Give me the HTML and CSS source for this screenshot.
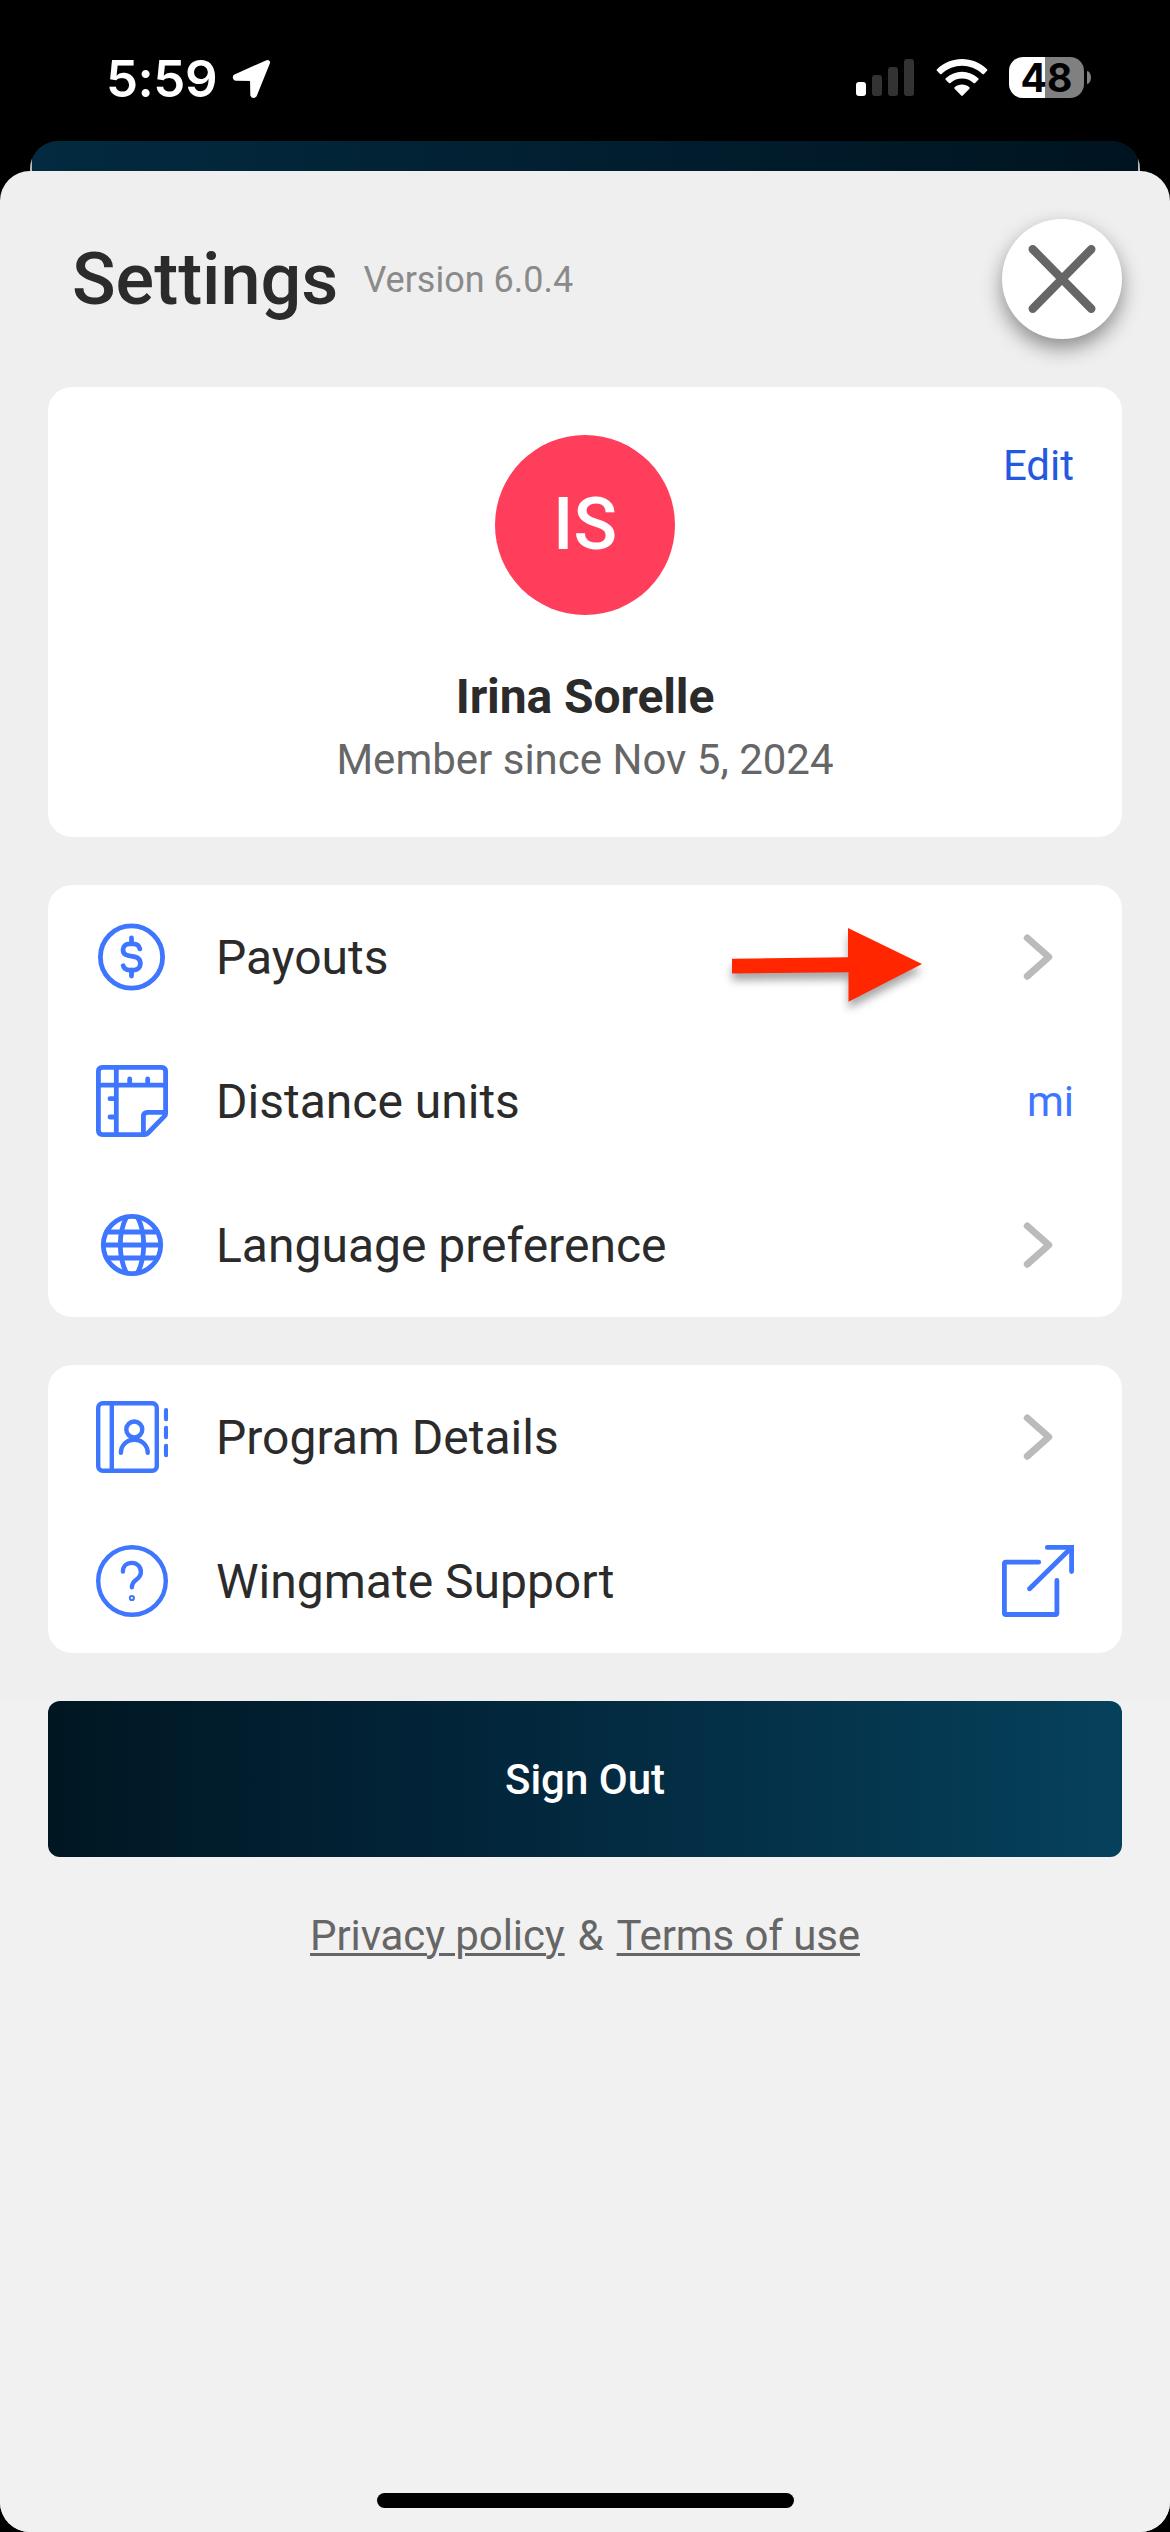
FILE: index.html
```html
<!DOCTYPE html>
<html lang="en">
<head>
<meta charset="utf-8">
<title>Settings</title>
<link rel="stylesheet" href="styles.css">
</head>
<body>
<div class="phone">
  <header class="status">
    <div class="status-left">
      <span class="time">5:59</span>
      <svg class="location" viewBox="0 0 40 40"><path d="M35.5 3.5 L3.5 17.7 Q3 19 4 19.2 L20.5 19.4 L20.8 36 Q21.3 37 22.4 36 Z" fill="#fff" stroke="#fff" stroke-width="5" stroke-linejoin="round"/></svg>
    </div>
    <div class="status-right">
      <svg class="signal" viewBox="0 0 58 38"><rect y="23" width="10" height="14" rx="3" fill="#fff"/><rect x="16" y="16" width="10" height="21" rx="3" fill="#333"/><rect x="32" y="8" width="10" height="29" rx="3" fill="#333"/><rect x="48" y="0" width="10" height="37" rx="3" fill="#333"/></svg>
      <svg class="wifi" viewBox="0 0 52 38"><g fill="#fff"><path d="M1 10.2 C15-3.4 37-3.4 51 10.2 q.8 .8 0 1.6 l-3 3.1 q-.8 .8-1.6 0 C34.5 4 17.500 4 5.600 14.900 q-.8 .8-1.6 0 l-3-3.100 q-.8-.8 0-1.600 Z"/><path d="M9.700 19.200 C19 10.500 33 10.500 42.300 19.200 q.8 .8 0 1.600 l-3.200 3.100 q-.8 .8-1.600 0 C31 18.100 21 18.100 14.500 23.900 q-.8 .8-1.600 0 l-3.200-3.100 q-.8-.8 0-1.600 Z"/><path d="M18.600 28.200 C22.800 24.600 29.200 24.600 33.400 28.200 q.8 .8 0 1.600 L26.800 36.500 q-.8 .8-1.600 0 L18.600 29.800 q-.8-.8 0-1.600 Z"/></g></svg>
      <div class="battery"><span class="level">48</span><i class="nub"></i></div>
    </div>
  </header>
  <div class="back-sheet"></div>
  <main class="sheet">
    <section class="top">
      <h1>Settings</h1>
      <span class="version">Version 6.0.4</span>
      <button class="close" aria-label="Close"><svg viewBox="0 0 120 120"><path d="M30.700 30.200 L89.300 89.800 M89.300 30.200 L30.700 89.800"/></svg></button>
    </section>

    <section class="card profile">
      <div class="avatar">IS</div>
      <div class="name">Irina Sorelle</div>
      <div class="since">Member since Nov 5, 2024</div>
      <a class="edit">Edit</a>
    </section>

    <section class="card">
      <div class="row">
        <svg class="icon" viewBox="0 0 72 72"><circle cx="35.500" cy="36" r="31.100"/><path d="M43.800 27.800 C43 24.500 40.500 22.900 37.500 22.900 H33.500 C29.800 22.900 27 25.300 27 28.800 C27 32 29 33.900 32 34.500 L39 35.900 C42.300 36.700 44.400 39 44.400 42.600 C44.400 46.500 41.500 49.100 38 49.100 H33.500 C30.300 49.100 28 47.500 27.200 44.700 M35.500 17 V22.900 M35.500 49 V55"/></svg>
        <span class="label">Payouts</span>
        <svg class="chevron" viewBox="0 0 72 72"><path d="M25.300 17 L46.800 36 L25.300 55.200"/></svg>
        <svg class="pointer" viewBox="0 0 200 84"><path d="M2 32.700 L118 31.300 V2 L192 38 L118.500 75.700 V46.200 L2 47.500 Z"/></svg>
      </div>
      <div class="row">
        <svg class="icon" viewBox="0 0 72 72"><path d="M6.500 2.400 H65.500 Q69.600 2.400 69.600 6.500 V48.500 Q69.600 50 68.500 51.100 L52 68 Q50.500 69.600 48.500 69.600 H6.500 Q2.400 69.600 2.400 65.500 V6.500 Q2.400 2.400 6.500 2.400 Z M20.300 2.400 V69.600 M2.400 20.200 H69.600 M33.700 14 V20 M51.700 14 V20 M14 33.700 H20 M14 52 H20 M69 47.400 H51.500 Q47.400 47.400 47.400 51.500 V69"/></svg>
        <span class="label">Distance units</span>
        <span class="value">mi</span>
      </div>
      <div class="row">
        <svg class="icon" viewBox="0 0 72 72"><circle cx="36" cy="36" r="28.700"/><path d="M10.500 23 H61.500 M7.400 36 H64.600 M10.500 49 H61.500 M30.300 8.500 C22.300 24 22.300 48 30.300 63.500 M41.700 8.500 C49.700 24 49.700 48 41.700 63.500"/></svg>
        <span class="label">Language preference</span>
        <svg class="chevron" viewBox="0 0 72 72"><path d="M25.300 17 L46.800 36 L25.300 55.200"/></svg>
      </div>
    </section>

    <section class="card">
      <div class="row">
        <svg class="icon thin" viewBox="0 0 72 72"><rect x="2.200" y="2.200" width="58.600" height="67.600" rx="4.500"/><path d="M15.800 2.200 V69.800 M70.100 9.300 V18 M70.100 27 V36 M70.100 45 V54 M24.900 51.700 C24.900 44.500 30.500 38.700 38.300 38.700 S51.700 44.500 51.700 51.700"/><circle cx="38.300" cy="28.500" r="8"/></svg>
        <span class="label">Program Details</span>
        <svg class="chevron" viewBox="0 0 72 72"><path d="M25.300 17 L46.800 36 L25.300 55.200"/></svg>
      </div>
      <div class="row">
        <svg class="icon thin" viewBox="0 0 72 72"><circle cx="36" cy="36" r="33.800"/><path d="M26.900 26.500 C26.900 21.500 30.500 17.900 35.900 17.900 S44.900 22 44.900 27 C44.900 35.500 35.900 33.500 35.900 42.300"/><circle class="dot" cx="35.900" cy="53" r="2.100"/></svg>
        <span class="label">Wingmate Support</span>
        <svg class="icon" viewBox="0 0 72 72"><path d="M36.700 17.200 H4 Q2.400 17.200 2.400 18.800 V68 Q2.400 69.500 4 69.500 H53.400 Q54.900 69.500 54.900 68 V35.500 M27.600 43.700 L68 4"/><path d="M45.300 2.400 H69.600 V26.500"/></svg>
      </div>
    </section>

    <footer class="bottom">
      <button class="signout">Sign Out</button>
      <p class="links"><a>Privacy policy</a><span>&amp;</span><a>Terms of use</a></p>
      <div class="home"></div>
    </footer>
  </main>
</div>
</body>
</html>
```
FILE: styles.css
```css
* { box-sizing: border-box; margin: 0; padding: 0; }
body { background: #000; font-family: Roboto, "Liberation Sans", sans-serif; color: #2b2b2b; }
svg { display: block; flex: none; }
button { border: 0; font-family: inherit; }

.phone { width: 1170px; height: 2532px; display: flex; flex-direction: column; overflow: hidden; }

.status { height: 141px; display: flex; justify-content: space-between; padding: 57px 79px 0 106px; font-family: Inter, "Liberation Sans", sans-serif; }
.status-left, .status-right { display: flex; align-items: flex-start; }
.time { font-size: 51px; font-weight: 600; line-height: 43px; letter-spacing: -0.5px; color: #fff; }
.location { width: 40px; height: 40px; margin: 2px 0 0 15px; }
.signal { width: 58px; height: 38px; margin: 2px 22px 0 0; }
.wifi { width: 52px; height: 38px; margin: 2px 21px 0 0; }
.battery { display: flex; align-items: center; gap: 3px; }
.level { width: 75px; height: 41px; border-radius: 14px; background: linear-gradient(90deg, #fff 36px, #808080 36px); color: #000; font-size: 39px; font-weight: 700; line-height: 42px; text-align: center; }
.nub { width: 4px; height: 13px; border-radius: 0 4px 4px 0 / 0 6.5px 6.5px 0; background: #808080; }

.back-sheet { height: 30px; margin: 0 30px; border-radius: 28px 28px 0 0; background: linear-gradient(#bbb, #bbb) left bottom / 2px 12px no-repeat, linear-gradient(#bbb, #bbb) right bottom / 2px 12px no-repeat, linear-gradient(90deg, #032a40, #001420); flex: none; }

.sheet { flex: 1; display: flex; flex-direction: column; gap: 48px; background: #efefef; border-radius: 30px; overflow: hidden; padding-top: 48px; }
.top { height: 120px; display: flex; align-items: center; padding: 0 48px 0 72px; }
h1 { font-size: 72px; font-weight: 500; line-height: 84px; padding-top: 2px; }
.version { font-size: 36px; color: #8a8a8a; margin-left: 25px; padding-top: 2px; }
.close { width: 120px; height: 120px; margin-left: auto; border-radius: 50%; background: #fff; box-shadow: 0 9px 20px rgba(0,0,0,.42); }
.close svg { width: 120px; height: 120px; fill: none; stroke: #666; stroke-width: 8.400px; stroke-linecap: round; }

.card { margin: 0 48px; background: #fff; border-radius: 24px; }
.profile { height: 450px; padding-top: 48px; display: flex; flex-direction: column; align-items: center; position: relative; }
.avatar { width: 180px; height: 180px; border-radius: 50%; background: #ff3e5b; color: #fff; font-size: 72px; font-weight: 500; line-height: 180px; text-align: center; }
.name { margin-top: 52px; font-size: 48px; font-weight: 700; line-height: 60px; letter-spacing: -0.1px; }
.since { margin-top: 6px; font-size: 42px; line-height: 54px; color: #666; }
.edit { position: absolute; top: 54px; right: 48px; font-size: 42px; line-height: 50px; color: #2459df; }

.row { height: 144px; display: flex; align-items: center; padding: 0 48px; position: relative; }
.icon { width: 72px; height: 72px; fill: none; stroke: #3f76ff; stroke-width: 4.800px; stroke-linecap: round; }
.thin { stroke-width: 4.400px; }
.dot { stroke-width: 2px; }
.label { flex: 1; margin-left: 48px; font-size: 48px; line-height: 60px; padding-top: 2px; }
.value { font-size: 42px; color: #3f76ff; }
.chevron { width: 72px; height: 72px; fill: none; stroke: #bbb; stroke-width: 7px; stroke-linecap: round; stroke-linejoin: round; }
.pointer { position: absolute; left: 682px; top: 41px; width: 200px; height: 84px; overflow: visible; fill: #ff2600; filter: drop-shadow(0 7px 4px rgba(0,0,0,.35)); }

.bottom { flex: 1; display: flex; flex-direction: column; background: #f1f1f1; padding: 0 48px 24px; }
.signout { height: 156px; border-radius: 12px; background: linear-gradient(90deg, #001722, #022439 38%, #06415b); color: #fff; font-size: 42px; font-weight: 500; }
.links { display: flex; justify-content: center; gap: 13px; margin-top: 54px; font-size: 42px; line-height: 50px; letter-spacing: -0.1px; color: #666; }
.links a { text-decoration: underline; text-decoration-thickness: 3px; text-underline-offset: 3px; }
.home { width: 417px; height: 15px; border-radius: 8px; background: #000; margin: auto auto 0; }
```
